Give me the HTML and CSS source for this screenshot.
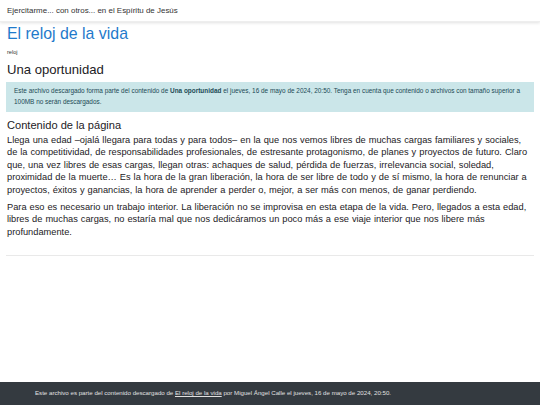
FILE: index.html
```html
<!DOCTYPE html>
<html lang="es">
<head>
  <meta charset="UTF-8">
  <title>El reloj de la vida</title>
  <meta name="viewport" content="width=device-width, initial-scale=1.0">
  <link rel="stylesheet" href="styles.css">
</head>
<body>

  <div class="navbar">Ejercitarme... con otros... en el Espíritu de Jesús</div>

  <div class="page">
    <h1 class="title">El reloj de la vida</h1>
    <div class="tag">reloj</div>

    <h2>Una oportunidad</h2>
    <div class="alert">
      Este archivo descargado forma parte del contenido de <b>Una oportunidad</b> el jueves, 16 de mayo de 2024, 20:50. Tenga en cuenta que contenido o archivos con tamaño superior a 100MB no serán descargados.
    </div>

    <h3>Contenido de la página</h3>
    <p>Llega una edad –ojalá llegara para todas y para todos– en la que nos vemos libres de muchas cargas familiares y sociales, de la competitividad, de responsabilidades profesionales, de estresante protagonismo, de planes y proyectos de futuro. Claro que, una vez libres de esas cargas, llegan otras: achaques de salud, pérdida de fuerzas, irrelevancia social, soledad, proximidad de la muerte… Es la hora de la gran liberación, la hora de ser libre de todo y de sí mismo, la hora de renunciar a proyectos, éxitos y ganancias, la hora de aprender a perder o, mejor, a ser más con menos, de ganar perdiendo.</p>
    <p>Para eso es necesario un trabajo interior. La liberación no se improvisa en esta etapa de la vida. Pero, llegados a esta edad, libres de muchas cargas, no estaría mal que nos dedicáramos un poco más a ese viaje interior que nos libere más profundamente.</p>

    <hr>
  </div>

  <div class="footer">
    Este archivo es parte del contenido descargado de <a href="#">El reloj de la vida</a> por Miguel Ángel Calle el jueves, 16 de mayo de 2024, 20:50.
  </div>

</body>
</html>
```

FILE: styles.css
```css
html, body {
  height: 100%;
}
body {
  margin: 0;
  font-family: "Liberation Sans", Arial, sans-serif;
  color: #1d2125;
  background: #fff;
  display: flex;
  flex-direction: column;
}
.navbar {
  height: 21px;
  line-height: 22px;
  padding: 0 7px;
  font-size: 7.95px;
  color: #333;
  box-shadow: 0 1px 3px rgba(0,0,0,0.12);
  border-bottom: 1px solid #eee;
}
.page {
  flex: 1;
  padding: 0 6px 0 7px;
}
.title {
  font-size: 15.9px;
  font-weight: normal;
  color: #1f7acb;
  margin: 2px 0 0;
  line-height: 20px;
}
.tag {
  font-size: 5.6px;
  margin-top: 4px;
  line-height: 8px;
  color: #333;
}
h2 {
  font-size: 13.1px;
  font-weight: normal;
  margin: 6px 0 4px;
  line-height: 16px;
}
.alert {
  background: #cbe6e9;
  color: #1c4a55;
  font-size: 6.43px;
  line-height: 10.5px;
  padding: 4px 8px 5px;
  margin-left: -1px;
}
h3 {
  font-size: 11.1px;
  font-weight: normal;
  margin: 6px 0 2px;
  line-height: 14px;
}
p {
  font-size: 9.28px;
  word-spacing: 0.4px;
  line-height: 12.45px;
  margin: 0 0 4.5px;
}
hr {
  border: none;
  border-top: 1px solid #e9e9e9;
  margin: 17px 0 0 -1px;
}
.footer {
  background: #343a40;
  color: #e0e0e0;
  font-size: 6.15px;
  height: 23px;
  line-height: 22px;
  padding: 0 35px;
}
.footer a {
  color: #e0e0e0;
}
```
